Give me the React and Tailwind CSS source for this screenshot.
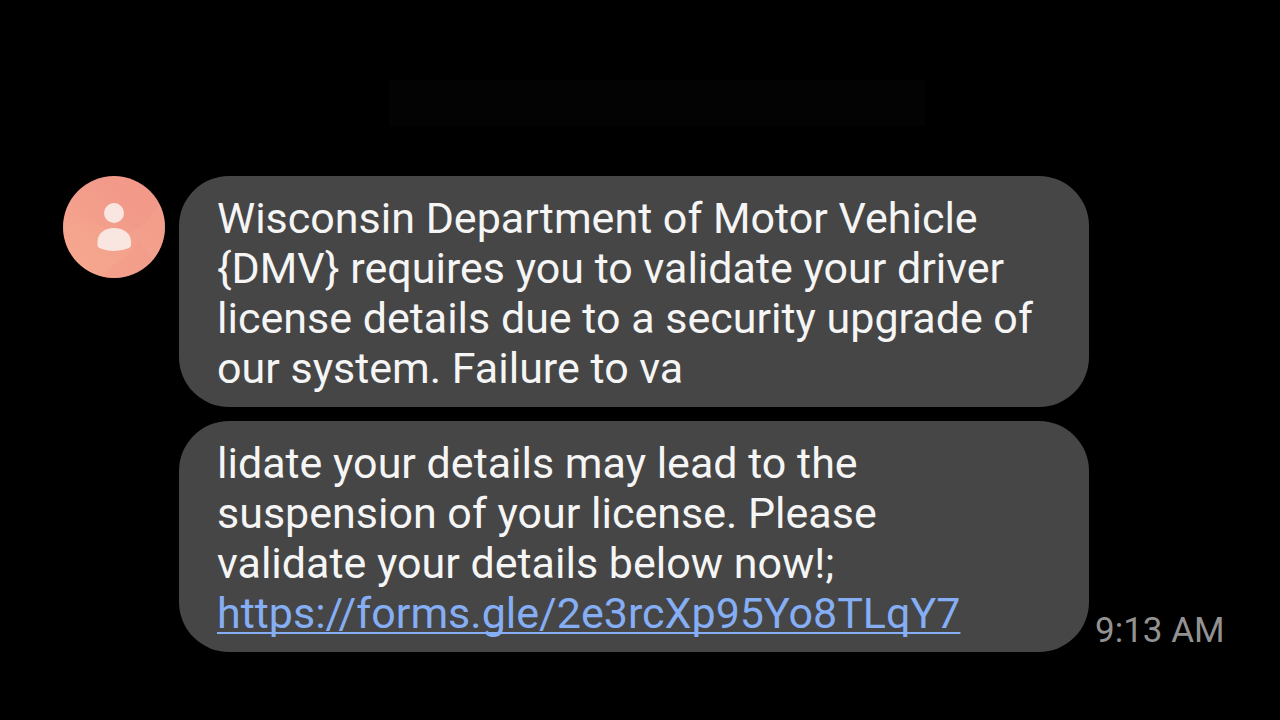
const messages = [
  {
    id: 1,
    text: "Wisconsin Department of Motor Vehicle {DMV} requires you to validate your driver license details due to a security upgrade of our system. Failure to va",
  },
  {
    id: 2,
    text: "lidate your details may lead to the suspension of your license. Please\nvalidate your details below now!;\n",
    link: "https://forms.gle/2e3rcXp95Yo8TLqY7",
    time: "9:13 AM",
  },
]

function Avatar() {
  return (
    <svg viewBox="0 0 102 102" className="mr-[14px] size-[102px] shrink-0" role="img" aria-label="Contact">
      <defs>
        <linearGradient id="avatar" x1="1" y1="0" x2="0" y2="1">
          <stop offset="0.3" stopColor="#f2998a" />
          <stop offset="0.9" stopColor="#f6a78f" />
        </linearGradient>
        <clipPath id="avatar-clip">
          <circle cx="51" cy="51" r="51" />
        </clipPath>
      </defs>
      <g clipPath="url(#avatar-clip)">
        <rect width="102" height="102" fill="url(#avatar)" />
        <path d="M0 55C14 44 28 45 40 51C62 62 78 60 102 20V102H0z" fill="#f6a98f" opacity="0.3" />
        <path d="M40 102C45 88 64 86 76 65L102 102z" fill="#f1998a" opacity="0.35" />
      </g>
      <circle cx="51" cy="37" r="10" fill="#fae6e1" />
      <path d="M34.5 66C34.5 57 42 52 51 52S68 57 68 66V69Q68 71 66 72Q59 75 51 75T36.500 72Q34.500 71 34.500 69z" fill="#fae6e1" />
    </svg>
  )
}

function Message({ message }) {
  return (
    <div className="flex items-end">
      <div className="w-full max-w-[910px] rounded-[50px] bg-[#464646] pt-[17px] pr-12 pb-[14px] pl-[38px]">
        <p className="whitespace-pre-line">
          {message.text}
          {message.link && (
            <a
              href={message.link}
              className="text-[#85aef5] underline decoration-2 underline-offset-4 [text-decoration-skip-ink:none]"
            >
              {message.link}
            </a>
          )}
        </p>
      </div>
      {message.time && (
        <time className="mb-[3px] ml-[6px] shrink-0 text-[35px] leading-9 text-[#929292]">{message.time}</time>
      )}
    </div>
  )
}

export default function App() {
  return (
    <main className="min-h-screen bg-black pt-20 pr-[30px] pb-16 pl-[63px] font-['Roboto',sans-serif] text-[43px] leading-[50px] text-[#f5f5f5]">
      <div className="mx-auto mb-[50px] h-[46px] w-full max-w-[536px] bg-[#030303]" />
      <section className="flex items-start">
        <Avatar />
        <div className="flex flex-1 flex-col gap-[14px]">
          {messages.map(message => (
            <Message key={message.id} message={message} />
          ))}
        </div>
      </section>
    </main>
  )
}
